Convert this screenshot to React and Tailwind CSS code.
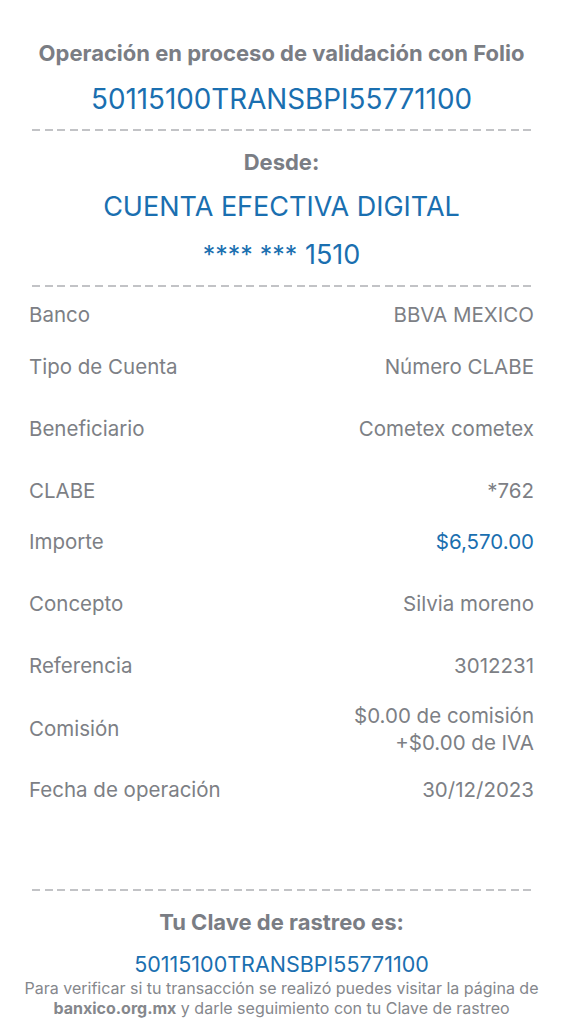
const dash = "h-[2px] mx-[32px] bg-[repeating-linear-gradient(90deg,#c2c3c6_0px,#c2c3c6_8px,transparent_8px,transparent_12.6px)]";

const rows = [
  { label: "Banco", value: "BBVA MEXICO", h: "h-[52px]" },
  { label: "Tipo de Cuenta", value: "Número CLABE", h: "h-[62px]" },
  { label: "Beneficiario", value: "Cometex cometex", h: "h-[62px]" },
  { label: "CLABE", value: "*762", h: "h-[51px]" },
  { label: "Importe", value: "$6,570.00", h: "h-[62px]", blue: true },
  { label: "Concepto", value: "Silvia moreno", h: "h-[62px]" },
  { label: "Referencia", value: "3012231", h: "h-[62px]" },
  { label: "Comisión", value: ["$0.00 de comisión", "+$0.00 de IVA"], h: "h-[62px]" },
  { label: "Fecha de operación", value: "30/12/2023", h: "h-[62px]" },
];

export default function App() {
  return (
    <div className="w-[563px] h-[1024px] bg-white overflow-hidden font-['Inter',sans-serif] text-[#7d7f85]">
      <div className="pt-[39px] text-center">
        <h1 className="text-[22px] leading-[28px] font-bold text-[#7a7d84]">
          Operación en proceso de validación con Folio
        </h1>
        <p className="mt-[16px] text-[27.8px] leading-[32px] text-[#1a6fb0]">50115100TRANSBPI55771100</p>
      </div>
      <div className={`${dash} mt-[14px]`} />
      <div className="text-center">
        <p className="mt-[17px] text-[22px] leading-[28px] font-bold text-[#7a7d84]">Desde:</p>
        <p className="mt-[15px] text-[27px] leading-[32px] text-[#1a6fb0]">CUENTA EFECTIVA DIGITAL</p>
        <p className="mt-[16px] text-[27px] leading-[32px] text-[#1a6fb0]">
          <span className="text-[25px]">**** ***</span> 1510
        </p>
      </div>
      <div className={`${dash} mt-[14px]`} />
      <div className="mt-[2px] px-[29px] text-[20.5px]">
        {rows.map((r) => (
          <div key={r.label} className={`${r.h} flex items-start justify-between`}>
            <span className={Array.isArray(r.value) ? "pt-[13px] leading-[28px]" : "pt-[12px] leading-[28px]"}>{r.label}</span>
            {Array.isArray(r.value) ? (
              <span className="text-right leading-[27px]">
                {r.value.map((v) => (
                  <div key={v}>{v}</div>
                ))}
              </span>
            ) : (
              <span className={`pt-[12px] leading-[28px] ${r.blue ? "text-[#1a6fb0]" : ""}`}>{r.value}</span>
            )}
          </div>
        ))}
      </div>
      <div className={`${dash} mt-[63px]`} />
      <div className="text-center">
        <p className="mt-[17px] text-[22px] leading-[28px] font-bold text-[#7a7d84]">Tu Clave de rastreo es:</p>
        <p className="mt-[15px] text-[21.5px] leading-[26px] text-[#1a6fb0]">50115100TRANSBPI55771100</p>
        <p className="mt-[1px] text-[16px] leading-[20px] text-[#85878c]">
          Para verificar si tu transacción se realizó puedes visitar la página de
          <br />
          <span className="font-bold">banxico.org.mx</span> y darle seguimiento con tu Clave de rastreo
        </p>
      </div>
    </div>
  );
}
